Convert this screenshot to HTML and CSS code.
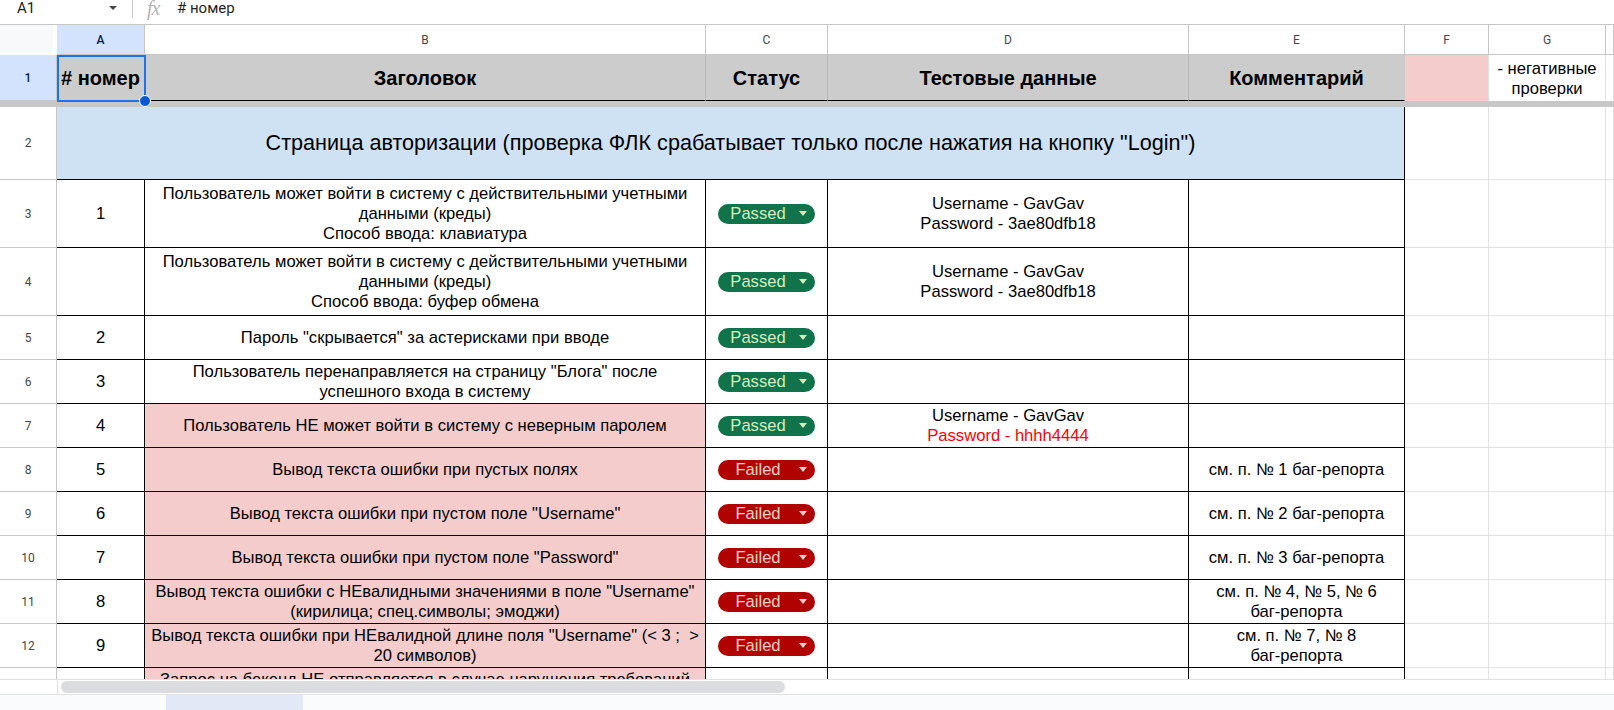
FILE: index.html
```html
<!DOCTYPE html>
<html lang="ru">
<head>
<meta charset="utf-8">
<title>Чек-лист</title>
<link rel="stylesheet" href="styles.css">
</head>
<body>
<div class="app">
  <div class="formula-bar">
    <div class="namebox"><span class="ref">A1</span><span class="caret"></span></div>
    <div class="sep"></div>
    <span class="fx">fx</span>
    <span class="formula"># номер</span>
  </div>

  <div class="viewport">
    <div class="grid">
      <!-- column headers -->
      <div class="corner"></div>
      <div class="ch sel">A</div>
      <div class="ch">B</div>
      <div class="ch">C</div>
      <div class="ch">D</div>
      <div class="ch">E</div>
      <div class="ch">F</div>
      <div class="ch">G</div>
      <div class="ch"></div>

      <!-- row 1 -->
      <div class="rh sel">1</div>
      <div class="cell hd"><span># номер</span></div>
      <div class="cell hd"><span>Заголовок</span></div>
      <div class="cell hd"><span>Статус</span></div>
      <div class="cell hd"><span>Тестовые данные</span></div>
      <div class="cell hd hd-last"><span>Комментарий</span></div>
      <div class="cell legend-pink"></div>
      <div class="cell legend"><span>- негативные<br>проверки</span></div>
      <div class="cell legend"></div>

      <div class="freeze"></div>

      <!-- row 2 -->
      <div class="rh">2</div>
      <div class="cell sec"><span>Страница авторизации (проверка ФЛК срабатывает только после нажатия на кнопку "Login")</span></div>
      <div class="cell"></div>
      <div class="cell"></div>
      <div class="cell"></div>

      <!-- row 3 -->
      <div class="rh">3</div>
      <div class="cell bk"><span>1</span></div>
      <div class="cell bk"><span>Пользователь может войти в систему с действительными учетными<br>данными (креды)<br>Способ ввода: клавиатура</span></div>
      <div class="cell bk"><span class="pill passed"><span class="pill-label">Passed</span><span class="pill-arrow"></span></span></div>
      <div class="cell bk"><span>Username - GavGav<br>Password - 3ae80dfb18</span></div>
      <div class="cell bk"></div>
      <div class="cell"></div>
      <div class="cell"></div>
      <div class="cell"></div>

      <!-- row 4 -->
      <div class="rh">4</div>
      <div class="cell bk"></div>
      <div class="cell bk"><span>Пользователь может войти в систему с действительными учетными<br>данными (креды)<br>Способ ввода: буфер обмена</span></div>
      <div class="cell bk"><span class="pill passed"><span class="pill-label">Passed</span><span class="pill-arrow"></span></span></div>
      <div class="cell bk"><span>Username - GavGav<br>Password - 3ae80dfb18</span></div>
      <div class="cell bk"></div>
      <div class="cell"></div>
      <div class="cell"></div>
      <div class="cell"></div>

      <!-- row 5 -->
      <div class="rh">5</div>
      <div class="cell bk"><span>2</span></div>
      <div class="cell bk"><span>Пароль "скрывается" за астерисками при вводе</span></div>
      <div class="cell bk"><span class="pill passed"><span class="pill-label">Passed</span><span class="pill-arrow"></span></span></div>
      <div class="cell bk"></div>
      <div class="cell bk"></div>
      <div class="cell"></div>
      <div class="cell"></div>
      <div class="cell"></div>

      <!-- row 6 -->
      <div class="rh">6</div>
      <div class="cell bk"><span>3</span></div>
      <div class="cell bk"><span>Пользователь перенаправляется на страницу "Блога" после<br>успешного входа в систему</span></div>
      <div class="cell bk"><span class="pill passed"><span class="pill-label">Passed</span><span class="pill-arrow"></span></span></div>
      <div class="cell bk"></div>
      <div class="cell bk"></div>
      <div class="cell"></div>
      <div class="cell"></div>
      <div class="cell"></div>

      <!-- row 7 -->
      <div class="rh">7</div>
      <div class="cell bk"><span>4</span></div>
      <div class="cell bk pink"><span>Пользователь НЕ может войти в систему с неверным паролем</span></div>
      <div class="cell bk"><span class="pill passed"><span class="pill-label">Passed</span><span class="pill-arrow"></span></span></div>
      <div class="cell bk"><span>Username - GavGav<br><span class="red">Password - hhhh4444</span></span></div>
      <div class="cell bk"></div>
      <div class="cell"></div>
      <div class="cell"></div>
      <div class="cell"></div>

      <!-- row 8 -->
      <div class="rh">8</div>
      <div class="cell bk"><span>5</span></div>
      <div class="cell bk pink"><span>Вывод текста ошибки при пустых полях</span></div>
      <div class="cell bk"><span class="pill failed"><span class="pill-label">Failed</span><span class="pill-arrow"></span></span></div>
      <div class="cell bk"></div>
      <div class="cell bk"><span>см. п. № 1 баг-репорта</span></div>
      <div class="cell"></div>
      <div class="cell"></div>
      <div class="cell"></div>

      <!-- row 9 -->
      <div class="rh">9</div>
      <div class="cell bk"><span>6</span></div>
      <div class="cell bk pink"><span>Вывод текста ошибки при пустом поле "Username"</span></div>
      <div class="cell bk"><span class="pill failed"><span class="pill-label">Failed</span><span class="pill-arrow"></span></span></div>
      <div class="cell bk"></div>
      <div class="cell bk"><span>см. п. № 2 баг-репорта</span></div>
      <div class="cell"></div>
      <div class="cell"></div>
      <div class="cell"></div>

      <!-- row 10 -->
      <div class="rh">10</div>
      <div class="cell bk"><span>7</span></div>
      <div class="cell bk pink"><span>Вывод текста ошибки при пустом поле "Password"</span></div>
      <div class="cell bk"><span class="pill failed"><span class="pill-label">Failed</span><span class="pill-arrow"></span></span></div>
      <div class="cell bk"></div>
      <div class="cell bk"><span>см. п. № 3 баг-репорта</span></div>
      <div class="cell"></div>
      <div class="cell"></div>
      <div class="cell"></div>

      <!-- row 11 -->
      <div class="rh">11</div>
      <div class="cell bk"><span>8</span></div>
      <div class="cell bk pink"><span>Вывод текста ошибки с НЕвалидными значениями в поле "Username"<br>(кирилица; спец.символы; эмоджи)</span></div>
      <div class="cell bk"><span class="pill failed"><span class="pill-label">Failed</span><span class="pill-arrow"></span></span></div>
      <div class="cell bk"></div>
      <div class="cell bk"><span>см. п. № 4, № 5, № 6<br>баг-репорта</span></div>
      <div class="cell"></div>
      <div class="cell"></div>
      <div class="cell"></div>

      <!-- row 12 -->
      <div class="rh">12</div>
      <div class="cell bk"><span>9</span></div>
      <div class="cell bk pink"><span>Вывод текста ошибки при НЕвалидной длине поля "Username" (&lt; 3 ;&nbsp; &gt;<br>20 символов)</span></div>
      <div class="cell bk"><span class="pill failed"><span class="pill-label">Failed</span><span class="pill-arrow"></span></span></div>
      <div class="cell bk"></div>
      <div class="cell bk"><span>см. п. № 7, № 8<br>баг-репорта</span></div>
      <div class="cell"></div>
      <div class="cell"></div>
      <div class="cell"></div>

      <!-- row 13 (cut by the scrollbar) -->
      <div class="rh"></div>
      <div class="cell bk"></div>
      <div class="cell bk pink"><span>Запрос на бекенд НЕ отправляется в случае нарушения требований<br>ФЛК</span></div>
      <div class="cell bk"></div>
      <div class="cell bk"></div>
      <div class="cell bk"></div>
      <div class="cell"></div>
      <div class="cell"></div>
      <div class="cell"></div>
    </div>

    <div class="selection"></div>
    <div class="sel-handle"></div>
  </div>

  <div class="hscroll">
    <div class="hs-corner"></div>
    <div class="hs-track"><div class="hs-thumb"></div></div>
  </div>
  <div class="tabs"><div class="tab-active"></div></div>
</div>
</body>
</html>
```

FILE: styles.css
```css
* { box-sizing: border-box; }

html, body {
  margin: 0;
  padding: 0;
}

body {
  width: 1614px;
  height: 710px;
  overflow: hidden;
  background: #fff;
  color: #000;
  font-family: "Liberation Sans", Arial, sans-serif;
}

.app {
  display: flex;
  flex-direction: column;
  height: 710px;
}

/* formula bar */
.formula-bar {
  flex: none;
  height: 25px;
  display: flex;
  align-items: flex-start;
  border-bottom: 1px solid #c4c7c5;
  font-family: Roboto, "Noto Sans", sans-serif;
  font-size: 15px;
  line-height: 16px;
  color: #1f1f1f;
}

.namebox {
  width: 132px;
  display: flex;
  align-items: flex-start;
  padding-left: 17px;
}

.namebox .ref { flex: 1; }

.caret {
  width: 0;
  height: 0;
  margin-top: 6px;
  margin-right: 15px;
  border-left: 4px solid transparent;
  border-right: 4px solid transparent;
  border-top: 4px solid #444746;
}

.sep {
  width: 1px;
  height: 18px;
  background: #c4c7c5;
}

.fx {
  width: 18px;
  margin-left: 14px;
  font-family: "Liberation Serif", serif;
  font-style: italic;
  font-size: 20px;
  line-height: 17px;
  color: #b4b4b4;
  letter-spacing: -1px;
}

.formula {
  margin-left: 12px;
}

/* sheet */
.viewport {
  position: relative;
  flex: none;
  height: 654px;
  overflow: hidden;
}

.grid {
  display: grid;
  grid-template-columns: 57px 88px 561px 122px 361px 216px 84px 117px 8px;
  grid-template-rows: 30px 46px 6px 73px 68px 68px repeat(9, 44px);
}

.corner {
  background: #f8f9fa;
  border-right: 4px solid #fff;
  border-bottom: 2px solid #fff;
}

.ch, .rh {
  display: flex;
  align-items: center;
  justify-content: center;
  font-family: Roboto, "Noto Sans", sans-serif;
  font-size: 12px;
  color: #444746;
  background: #fff;
  border-right: 1px solid #c4c7c5;
  border-bottom: 1px solid #c4c7c5;
}

.ch.sel, .rh.sel {
  background: #d3e3fd;
  color: #041e49;
  font-weight: 500;
}

.freeze {
  grid-column: 1 / -1;
  background: #c7c7c7;
}

.cell {
  display: flex;
  align-items: center;
  justify-content: center;
  text-align: center;
  padding: 0 3px;
  font-size: 16.6px;
  line-height: 20px;
  white-space: nowrap;
  overflow: hidden;
  border-right: 1px solid #e1e1e1;
  border-bottom: 1px solid #e1e1e1;
}

.bk {
  border-right-color: #000;
  border-bottom-color: #000;
}

.pink { background: #f4cccc; }

.red { color: #ff0000; }

.hd {
  background: #cccccc;
  font-weight: bold;
  font-size: 20px;
  overflow: visible;
  border-right-color: #b7b7b7;
  border-bottom-color: #000;
}

.hd-last { border-right-color: #cccccc; }

.legend-pink {
  background: #f4cccc;
  border-bottom-color: #f4cccc;
}

.legend {
  align-items: flex-end;
  padding-bottom: 1px;
  border-bottom-color: #fff;
}

.sec {
  grid-column: span 5;
  background: #cfe2f3;
  font-size: 21.6px;
  border-right-color: #000;
  border-bottom-color: #000;
}

/* status chips */
.pill {
  display: flex;
  align-items: center;
  width: 97px;
  height: 20px;
  padding-right: 8px;
  border-radius: 10px;
  line-height: 20px;
}

.pill-label {
  flex: 1;
  text-align: center;
}

.pill-arrow {
  width: 0;
  height: 0;
  margin: 0 0.5px;
  border-left: 4.5px solid transparent;
  border-right: 4.5px solid transparent;
  border-top: 5px solid currentColor;
}

.passed {
  background: #11734b;
  color: #d4edbc;
}

.failed {
  background: #b10202;
  color: #ffcfc9;
}

/* selection */
.selection {
  position: absolute;
  left: 57px;
  top: 30px;
  width: 89px;
  height: 47px;
  border: 2px solid #1a73e8;
  pointer-events: none;
}

.sel-handle {
  position: absolute;
  left: 139px;
  top: 70px;
  width: 12px;
  height: 12px;
  border-radius: 50%;
  background: #0b57d0;
  border: 1px solid #fff;
}

/* horizontal scrollbar */
.hscroll {
  flex: none;
  height: 15px;
  display: flex;
  border-top: 1px solid #e1e1e1;
  background: #fff;
}

.hs-corner {
  width: 58px;
  border-right: 1px solid #e1e1e1;
}

.hs-track {
  flex: 1;
  padding: 1px 0 0 3px;
}

.hs-thumb {
  width: 724px;
  height: 12px;
  border-radius: 6px;
  background: #dadce0;
}

/* sheet tabs bar */
.tabs {
  flex: none;
  height: 16px;
  display: flex;
  background: #f9fbfd;
  border-top: 1px solid #e1e3e1;
}

.tab-active {
  width: 137px;
  margin-left: 166px;
  background: #e1e9f7;
}
```
